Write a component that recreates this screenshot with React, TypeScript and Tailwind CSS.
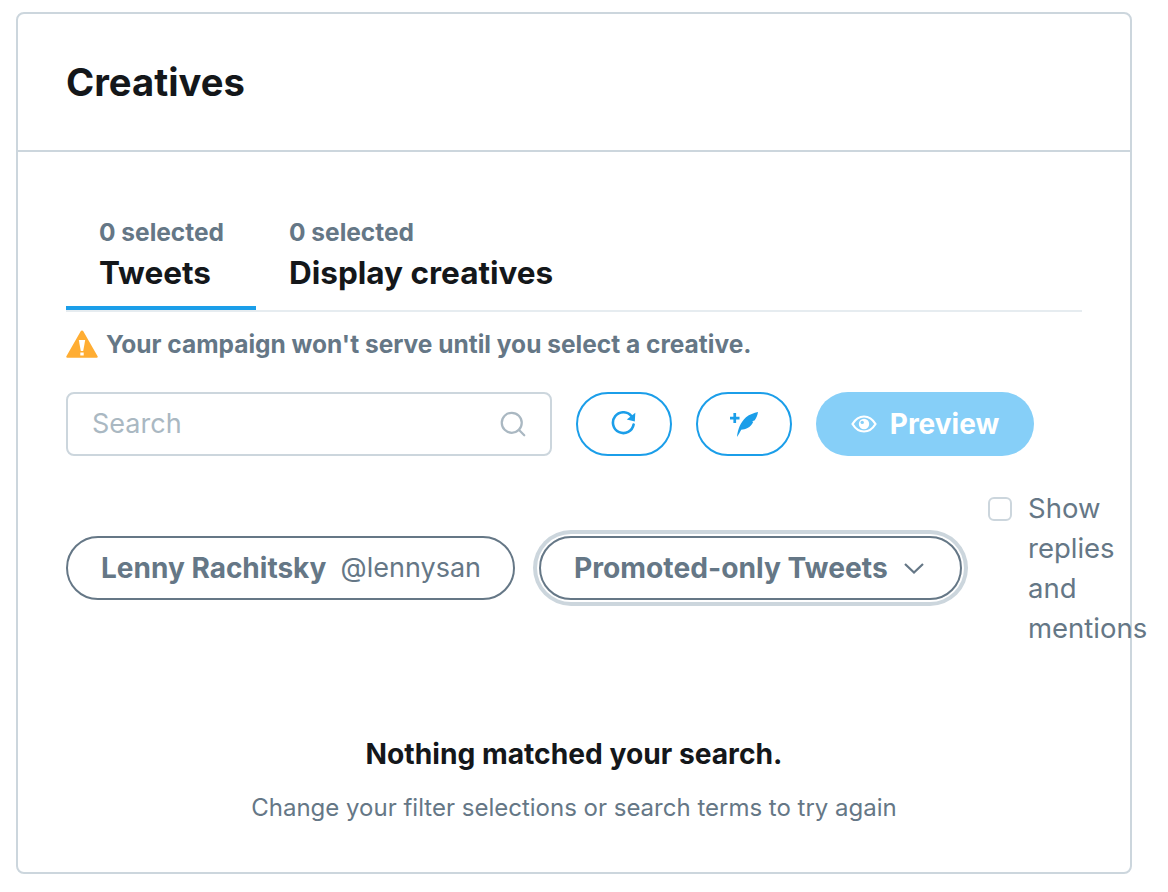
import { Search } from 'lucide-react'

function RefreshIcon() {
  return (
    <svg width="26" height="26" viewBox="0 0 26 26" fill="none">
      <path d="M20.500 5.200A10.400 10.400 0 1 0 22.600 13.500" stroke="#1b9ee9" strokeWidth="2.600" strokeLinecap="round" />
      <path d="M24.300 1.800L23.800 10.400L15.800 8.400z" fill="#1b9ee9" />
    </svg>
  )
}

function FeatherPlus() {
  return (
    <svg width="28" height="25" viewBox="0 0 28 25" fill="#1b9ee9">
      <path d="M0 4.700h3.400V1h2.700v3.700h3.400v2.700H6.100v3.700H3.400V7.400H0z" />
      <path d="M7 25C7.500 18 10.500 10 16 5.200 19.500 2.300 24 1 28 0c-.5 3.500-1.800 6.500-3.500 8.500l-2.500 .7 1.300 .5c-1.300 2.700-3.200 5-5.800 6.300-2 1-4.300 1.500-6.300 1.700C10 20.200 8.500 22.800 7 25z" />
    </svg>
  )
}

function EyeIcon() {
  return (
    <svg width="26" height="18" viewBox="0 0 26 18" fill="none">
      <path d="M1.500 9C4.500 4 8.500 1.500 13 1.500S21.500 4 24.500 9C21.500 14 17.500 16.500 13 16.500S4.500 14 1.500 9z" stroke="#fff" strokeWidth="2.200" />
      <circle cx="13" cy="9" r="5.200" fill="#fff" />
      <circle cx="11.200" cy="7.400" r="1.700" fill="#86cff8" />
    </svg>
  )
}

function WarningIcon() {
  return (
    <svg width="32" height="28" viewBox="0 0 32 28">
      <path d="M16 .5c.6 0 1 .3 1.300 .8l14.300 25c.4 .7 0 1.400-.8 1.400H1.200c-.8 0-1.200-.7-.8-1.400L14.700 1.300c.3-.5 .7-.8 1.300-.8z" fill="#ffad33" />
      <path d="M12.800 10h6.400l-2 11h-2.400z" fill="#fff" />
      <rect x="14.300" y="22.500" width="3.400" height="3" fill="#fff" />
    </svg>
  )
}

function Chevron() {
  return (
    <svg width="20" height="11" viewBox="0 0 20 11" fill="none">
      <path d="M1 1l9 8.500L19 1" stroke="#657786" strokeWidth="2.200" />
    </svg>
  )
}

export default function App() {
  return (
    <div className="h-[892px] w-[1168px] overflow-hidden bg-white pl-4 pt-3 font-['Inter',sans-serif]">
      <section className="h-[862px] w-[1116px] rounded-lg border-2 border-[#ccd6dd]">
        <header className="flex h-[138px] items-center border-b-2 border-[#ccd6dd] pt-[1px] pl-12">
          <h1 className="text-[38.2px] font-bold leading-none text-[#14171a]">Creatives</h1>
        </header>

        <div className="pl-12 pr-12">
          <div className="mt-[64px] border-b-2 border-[#e6ecf0]">
            <div className="flex">
              <div className="w-[190px] shrink-0 border-b-4 border-[#1b9ee9] pb-[12px] pl-[33px]">
                <div className="text-[24.5px] font-bold leading-[32px] text-[#657786]">0 selected</div>
                <div className="mt-[4px] text-[31.5px] font-bold leading-[42px] text-[#14171a]">Tweets</div>
              </div>
              <div className="pl-[33px]">
                <div className="text-[24.5px] font-bold leading-[32px] text-[#657786]">0 selected</div>
                <div className="mt-[4px] text-[31.5px] font-bold leading-[42px] text-[#14171a]">Display creatives</div>
              </div>
            </div>
          </div>

          <div className="mt-[16px] flex h-8 items-center gap-2 text-[24.5px] font-bold text-[#657786]">
            <WarningIcon />
            <span>Your campaign won't serve until you select a creative.</span>
          </div>

          <div className="mt-[32px] flex h-16 items-center gap-6">
            <div className="flex h-16 w-[486px] items-center justify-between rounded-lg border-2 border-[#ccd6dd] pl-6 pr-[22px]">
              <span className="mt-[1px] text-[27px] text-[#aab8c2]">Search</span>
              <Search size={30} color="#aab8c2" strokeWidth={1.8} />
            </div>
            <button type="button" className="flex h-16 w-24 items-center justify-center rounded-full border-2 border-[#1b9ee9]">
              <RefreshIcon />
            </button>
            <button type="button" className="flex h-16 w-24 items-center justify-center rounded-full border-2 border-[#1b9ee9]">
              <FeatherPlus />
            </button>
            <button type="button" className="flex h-16 w-[218px] items-center justify-center gap-[13px] rounded-full bg-[#86cff8] text-[28px] font-bold text-white">
              <EyeIcon />
              Preview
            </button>
          </div>

          <div className="mt-[32px] flex items-start">
            <div className="mt-[48px] flex h-16 w-[449px] shrink-0 items-center justify-between rounded-full border-2 border-[#657786] pl-[33px] pr-[32px] text-[#657786]">
              <span className="text-[28px] font-bold">Lenny Rachitsky</span>
              <span className="text-[27px]">@lennysan</span>
            </div>
            <div className="ml-[24px] mt-[48px] flex h-16 w-[423px] shrink-0 items-center justify-between rounded-full border-2 border-[#657786] pl-[33px] pr-[36px] text-[#657786] shadow-[0_0_0_2px_#ffffff,0_0_0_6px_#ccd6dd]">
              <span className="text-[28.2px] font-bold">Promoted-only Tweets</span>
              <Chevron />
            </div>
            <div className="ml-[26px] flex w-[120px] shrink-0 items-start gap-4">
              <div className="mt-[9px] h-6 w-6 shrink-0 rounded-md border-2 border-[#ccd6dd] bg-white" />
              <div className="text-[27.5px] leading-[40px] text-[#657786]">
                Show replies and mentions
              </div>
            </div>
          </div>

          <div className="mt-[86px] text-center">
            <div className="text-[28.2px] font-bold leading-[40px] text-[#14171a]">Nothing matched your search.</div>
            <div className="mt-[18px] text-[24px] leading-[32px] text-[#657786]">Change your filter selections or search terms to try again</div>
          </div>
        </div>
      </section>
    </div>
  )
}
